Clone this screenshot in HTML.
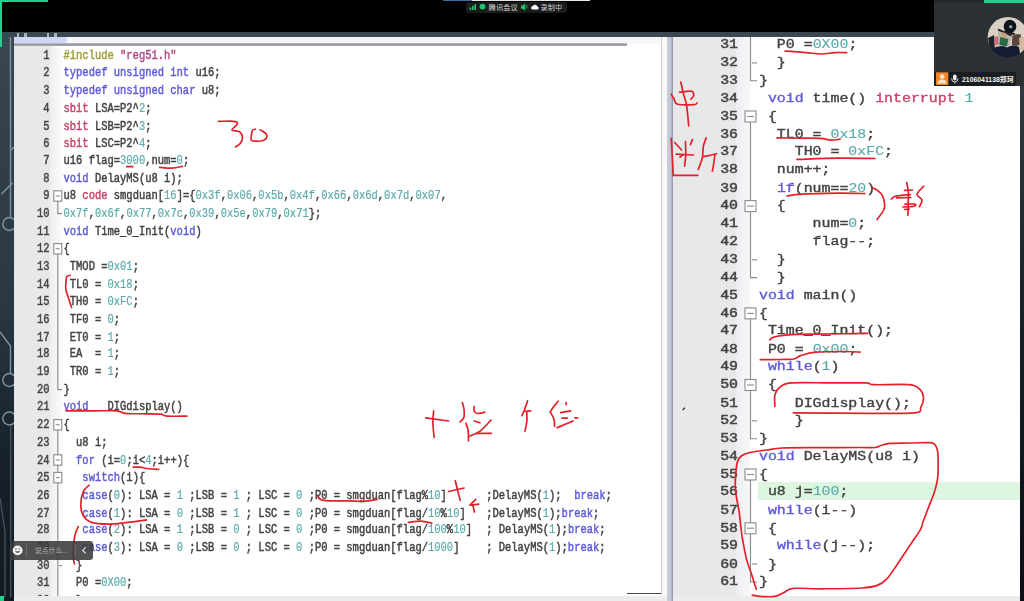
<!DOCTYPE html>
<html lang="zh">
<head>
<meta charset="utf-8">
<title>腾讯会议 - 屏幕共享</title>
<style>
*{margin:0;padding:0;box-sizing:border-box}
html,body{width:1024px;height:601px;overflow:hidden;background:#fff}
body{position:relative;font-family:"Liberation Sans","Noto Sans CJK SC",sans-serif}
.abs{position:absolute}
/* ---------- frame ---------- */
#topblack{left:0;top:0;width:1024px;height:32px;background:#000}
#topstrip{left:0;top:32px;width:1024px;height:4.5px;background:#3b4852}
#leftstrip{left:0;top:32px;width:14px;height:569px;background:linear-gradient(180deg,#3a4851 0,#34424c 70px,#2a3842 270px,#18222b 420px,#121a21 569px)}
#leftline{left:14px;top:37px;width:1px;height:560px;background:#dde5ef}
#rightstrip{left:1020.2px;top:86px;width:3.8px;height:515px;background:linear-gradient(180deg,#2f3b43 0,#18222a 214px,#0b0d13 515px);z-index:4}
#gtop{left:0;top:0;width:48px;height:2px;background:#1fd18b}
#gleft{left:0;top:0;width:2px;height:47px;background:#1fd18b}
#gbot{left:0;top:596px;width:4px;height:5px;background:#1fd18b}
/* ---------- left pane ---------- */
#ltab{left:14px;top:36.5px;width:647px;height:7px;background:linear-gradient(90deg,#ccd8f4 0,#ccd8f4 51px,#f5f6f9 54px)}
#ltabline{left:14px;top:43px;width:613px;height:2.7px;background:linear-gradient(180deg,#c4c4cc,#8e8e96 60%,#b8b8be)}
#lgutter{left:15px;top:46px;width:35px;height:551px;background:#e8e8e8}
#lfoldm{left:50px;top:46px;width:13px;height:551px;background:linear-gradient(90deg,#eeeeee,#f7f7f7 60%,#fcfcfc)}
#lsbline{left:661px;top:37px;width:1px;height:558px;background:#d2cecf}
#lsb{left:662px;top:37px;width:5px;height:558px;background:#f8f8f9}
#divider{left:667px;top:36.5px;width:5.6px;height:565px;background:linear-gradient(90deg,#c9cddc 0,#c2c7d7 62%,#8a92a4 100%);z-index:3}
#lcorner{left:627.3px;top:592.8px;width:34px;height:1.5px;background:#484848}
#botbar{z-index:2;left:14px;top:595.6px;width:1006px;height:5.4px;background:#ececec}
/* ---------- right pane ---------- */
#rgutter{left:672px;top:36.5px;width:64px;height:560px;background:#e8e8e8}
#rfoldm{left:736px;top:36.5px;width:15px;height:560px;background:linear-gradient(90deg,#eceef2,#f9f9f9)}
#hl{left:758px;top:482px;width:262px;height:18px;background:#ddf6e0}
/* ---------- code ---------- */
pre{position:absolute;font-family:"Liberation Mono",monospace;font-weight:normal;-webkit-text-stroke:0.42px currentColor;transform:scaleY(.87);transform-origin:0 0;white-space:pre;color:#424242;filter:blur(.45px)}
#lnum{left:14px;top:46.9px;width:35.5px;text-align:right;font-size:10.45px;line-height:14.907px;transform:scaleY(1.18);color:#444;-webkit-text-stroke-width:.4px}
#lcode{left:63.5px;top:46.9px;font-size:10.47px;line-height:14.907px;transform:scaleY(1.18);-webkit-text-stroke-width:.4px}
#rnum{left:672px;top:35.7px;width:66px;text-align:right;font-size:14.9px;line-height:20.575px;color:#444;-webkit-text-stroke-width:.55px}
#rcode{left:759px;top:35.7px;font-size:14.9px;line-height:20.575px}
.k{color:#605cd8}
.k2{color:#cb4468}
.n{color:#58aaaa;-webkit-text-stroke-width:.15px}
.p{color:#9e9e3c}
.s{color:#b04c88}

#tabmarks i{position:absolute;top:33px;width:2px;height:4px;background:#aab3ba;display:block}
#tabmarks{left:0;top:0}
#topbar1{left:443px;top:0;width:29px;height:1px;background:#3f6c9c}
#topbar2{left:472px;top:0;width:118px;height:1px;background:#e4e4e4}
#pill{left:466px;top:1.5px;width:101px;height:11px;background:#1b1b1b;border-radius:2px}
#pill svg,#chat svg{display:block}
#vid{z-index:6;left:934px;top:0;width:90px;height:86px;background:#2b3135;overflow:hidden}
#vidtop{left:0;top:0;width:90px;height:3px;background:#22282c}
#vidgreen{left:50px;top:0;width:40px;height:2.5px;background:#1fd18b}
#vidlabel{left:0;top:72px;width:82px;height:14px;background:#1b1e21}
#chat{z-index:6;left:10px;top:541px;width:83px;height:19px;background:rgba(58,58,58,.88);border-radius:3px;overflow:hidden}
.t{display:inline-block;width:1.6px}
</style>
</head>
<body>
<div class="abs" id="topblack"></div>
<div class="abs" id="topstrip"></div>
<div class="abs" id="leftstrip"></div>
<div class="abs" id="leftline"></div>
<div class="abs" id="rightstrip"></div>

<!-- left pane -->
<div class="abs" id="ltab"></div>
<div class="abs" id="ltabline"></div>
<div class="abs" id="lgutter"></div>
<div class="abs" id="lfoldm"></div>
<div class="abs" id="lsbline"></div>
<div class="abs" id="lsb"></div>
<div class="abs" id="divider"></div>
<div class="abs" id="lcorner"></div>

<!-- right pane -->
<div class="abs" id="rgutter"></div>
<div class="abs" id="rfoldm"></div>
<div class="abs" id="hl"></div>

<!--FOLD-->
<svg class="abs" id="fold" width="1024" height="601" viewBox="0 0 1024 601" style="left:0;top:0"><g fill="none" stroke="#8a8a8a" stroke-width="1.1">
<path d="M750.5,37 V80.8 H757"/>
<path d="M752.0,62.9 H757"/>
<path d="M750.5,116.5 V277.6 H757"/>
<path d="M752.0,259.8 H757"/>
<rect x="745.0" y="111.0" width="11.0" height="11.0" fill="#fff"/><path d="M747.0,116.5 H754.0"/>
<rect x="745.0" y="200.6" width="11.0" height="11.0" fill="#fff"/><path d="M747.0,206.1 H754.0"/>
<path d="M750.5,313.4 V438.7 H757"/>
<path d="M752.0,420.8 H757"/>
<rect x="745.0" y="307.9" width="11.0" height="11.0" fill="#fff"/><path d="M747.0,313.4 H754.0"/>
<rect x="745.0" y="379.5" width="11.0" height="11.0" fill="#fff"/><path d="M747.0,385.0 H754.0"/>
<path d="M750.5,474.5 V582.0 H757"/>
<path d="M752.0,564.0 H757"/>
<rect x="745.0" y="469.0" width="11.0" height="11.0" fill="#fff"/><path d="M747.0,474.5 H754.0"/>
<rect x="745.0" y="522.8" width="11.0" height="11.0" fill="#fff"/><path d="M747.0,528.2 H754.0"/>
<path d="M57.8,196.0 V213.6 H62"/>
<rect x="53.8" y="190.8" width="8.0" height="10.4" fill="#fff"/><path d="M55.8,196.0 H59.8"/>
<path d="M57.8,248.8 V389.6 H62"/>
<rect x="53.8" y="243.6" width="8.0" height="10.4" fill="#fff"/><path d="M55.8,248.8 H59.8"/>
<path d="M57.8,424.8 V597"/>
<path d="M58.8,565.6 H62"/>
<rect x="53.8" y="419.6" width="8.0" height="10.4" fill="#fff"/><path d="M55.8,424.8 H59.8"/>
<rect x="53.8" y="454.8" width="8.0" height="10.4" fill="#fff"/><path d="M55.8,460.0 H59.8"/>
<rect x="53.8" y="472.4" width="8.0" height="10.4" fill="#fff"/><path d="M55.8,477.6 H59.8"/>
</g></svg>
<!--/FOLD-->
<pre id="lnum">1
2
3
4
5
6
7
8
9
10
11
12
13
14
15
16
17
18
19
20
21
22
23
24
25
26
27
28
29
30
31
32</pre>
<pre id="lcode"><span class="p">#include </span><span class="s">"reg51.h"</span>
<span class="k">typedef unsigned int</span> u16;
<span class="k">typedef unsigned char</span> u8;
<span class="k2">sbit</span> LSA=P2^<span class="n">2</span>;
<span class="k2">sbit</span> LSB=P2^<span class="n">3</span>;
<span class="k2">sbit</span> LSC=P2^<span class="n">4</span>;
u16 flag=<span class="n">3000</span>,num=<span class="n">0</span>;
<span class="k">void</span> DelayMS(u8 i);
u8 <span class="k2">code</span> smgduan[<span class="n">16</span>]={<span class="n">0x3f</span>,<span class="n">0x06</span>,<span class="n">0x5b</span>,<span class="n">0x4f</span>,<span class="n">0x66</span>,<span class="n">0x6d</span>,<span class="n">0x7d</span>,<span class="n">0x07</span>,
<span class="n">0x7f</span>,<span class="n">0x6f</span>,<span class="n">0x77</span>,<span class="n">0x7c</span>,<span class="n">0x39</span>,<span class="n">0x5e</span>,<span class="n">0x79</span>,<span class="n">0x71</span>};
<span class="k">void</span> Time_0_Init(<span class="k">void</span>)
{
 TMOD =<span class="n">0x01</span>;
 TL0 = <span class="n">0x18</span>;
 TH0 = <span class="n">0xFC</span>;
 TF0 = <span class="n">0</span>;
 ET0 = <span class="n">1</span>;
 EA  = <span class="n">1</span>;
 TR0 = <span class="n">1</span>;
}
<span class="k">void</span>   DIGdisplay()
{
  u8 i;
  <span class="k">for</span> (i=<span class="n">0</span>;i&lt;<span class="n">4</span>;i++){
   <span class="k">switch</span>(i){
   <span class="k">case</span>(<span class="n">0</span>): LSA = <span class="n">1</span> ;LSB = <span class="n">1</span> ; LSC = <span class="n">0</span> ;P0 = smgduan[flag%<span class="n">10</span>]      <i class="t"></i>;DelayMS(<span class="n">1</span>);  <span class="k">break</span>;
   <span class="k">case</span>(<span class="n">1</span>): LSA = <span class="n">0</span> ;LSB = <span class="n">1</span> ; LSC = <span class="n">0</span> ;P0 = smgduan[flag/<span class="n">10</span>%<span class="n">10</span>]   <i class="t"></i>;DelayMS(<span class="n">1</span>);<span class="k">break</span>;
   <span class="k">case</span>(<span class="n">2</span>): LSA = <span class="n">1</span> ;LSB = <span class="n">0</span> ; LSC = <span class="n">0</span> ;P0 = smgduan[flag/<span class="n">100</span>%<span class="n">10</span>]  <i class="t"></i>; DelayMS(<span class="n">1</span>);<span class="k">break</span>;
   <span class="k">case</span>(<span class="n">3</span>): LSA = <span class="n">0</span> ;LSB = <span class="n">0</span> ; LSC = <span class="n">0</span> ;P0 = smgduan[flag/<span class="n">1000</span>]    <i class="t"></i>; DelayMS(<span class="n">1</span>);<span class="k">break</span>;
  }
  P0 =<span class="n">0X00</span>;
  }</pre>

<pre id="rnum">31
32
33
34
35
36
37
38
39
40
41
42
43
44
45
46
47
48
49
50
51
52
53
54
55
56
57
58
59
60
61</pre>
<pre id="rcode">  P0 =<span class="n">0X00</span>;
  }
}
 <span class="k">void</span> time() <span class="k2">interrupt</span> <span class="n">1</span>
 {
  TL0 = <span class="n">0x18</span>;
    TH0 = <span class="n">0xFC</span>;
  num++;
  <span class="k">if</span>(num==<span class="n">20</span>)
  {
      num=<span class="n">0</span>;
      flag--;
  }
  }
<span class="k">void</span> main()
{
 Time_0_Init();
 P0 = <span class="n">0x00</span>;
 <span class="k">while</span>(<span class="n">1</span>)
 {
    DIGdisplay();
    }
}
<span class="k">void</span> DelayMS(u8 i)
{
 u8 j=<span class="n">100</span>;
 <span class="k">while</span>(i--)
 {
  <span class="k">while</span>(j--);
 }
}</pre>

<!--INK-->
<svg class="abs" id="ink" width="1024" height="601" viewBox="0 0 1024 601" style="left:0;top:0;filter:blur(.3px);z-index:5" role="img" aria-label="手写批注：30 十位 个位 十 个 中断 载"><title>手写批注：30 十位 个位 十 个 中断 载</title><g fill="none" stroke="#e3212b" stroke-width="1.7" stroke-linecap="round" stroke-linejoin="round">
<path d="M218.6,121.3 C220.3,121.3 226.2,121.2 229.0,121.2 C231.8,121.2 234.1,121.1 235.5,121.6 C236.9,122.1 237.9,122.8 237.3,124.2 C236.7,125.6 231.6,128.7 232.0,130.0 C232.4,131.3 237.8,130.5 239.6,131.8 C241.3,133.1 242.4,135.7 242.5,137.6 C242.6,139.5 241.4,141.8 240.2,143.4 C239.0,145.0 236.3,146.3 235.5,146.9"/>
<path d="M255.2,129.1 C254.7,129.3 253.0,129.8 252.4,130.6 C251.8,131.4 251.8,132.4 251.6,134.0 C251.4,135.6 250.5,139.0 251.4,140.2 C252.3,141.4 255.2,141.1 257.0,141.2 C258.8,141.3 260.7,141.2 262.2,140.8 C263.7,140.4 265.0,139.6 265.8,138.8 C266.6,138.0 266.9,136.9 266.9,136.0 C266.9,135.1 266.5,134.4 265.8,133.6 C265.1,132.8 263.5,131.8 262.6,131.2 C261.7,130.6 260.6,130.2 260.2,130.0"/>
<path d="M159.6,167.4 C161.7,167.5 168.2,168.4 172.0,168.2 C175.8,168.0 180.8,166.6 182.5,166.3"/>
<path d="M70.0,275.4 C69.5,275.6 67.5,275.5 66.8,276.6 C66.1,277.7 66.2,279.9 66.0,282.0 C65.8,284.1 65.4,286.4 65.8,289.1 C66.2,291.8 67.5,294.9 68.5,298.0 C69.5,301.1 71.1,305.8 71.6,307.4"/>
<path d="M66.0,410.8 C70.8,410.8 86.6,410.9 95.0,410.9 C103.4,410.9 111.5,410.4 116.5,410.8 C121.5,411.2 120.5,412.8 125.3,413.3 C130.1,413.8 139.1,413.7 145.0,413.8 C150.9,413.9 156.8,413.8 160.5,414.2 C164.2,414.6 162.6,415.8 167.0,416.1 C171.4,416.4 183.5,416.2 186.8,416.2"/>
<path d="M133.2,467.2 C134.3,467.2 137.7,466.9 140.0,467.1 C142.3,467.3 143.9,468.1 147.0,468.5 C150.1,468.9 156.7,469.2 158.6,469.4"/>
<path d="M433.7,410.9 C433.6,412.7 432.7,417.1 432.8,421.5 C432.9,425.9 433.9,434.7 434.1,437.3"/>
<path d="M462.3,402.5 C462.6,403.8 463.9,407.4 464.1,410.0 C464.3,412.6 464.4,415.9 463.7,417.9 C463.0,419.9 460.7,421.2 460.1,421.9"/>
<path d="M465.9,423.2 C466.3,424.4 467.7,427.4 468.1,430.3 C468.5,433.2 468.4,439.1 468.5,440.9"/>
<path d="M474.2,406.5 C474.2,407.2 473.7,409.7 474.2,410.9 C474.7,412.1 475.5,413.3 477.3,413.5 C479.1,413.7 483.6,412.4 484.8,412.2"/>
<path d="M491.0,420.1 C489.2,422.0 483.5,428.6 480.0,431.2 C476.5,433.8 471.5,435.2 469.8,436.0"/>
<path d="M527.6,400.7 C527.1,402.2 525.6,407.1 524.6,409.6 C523.6,412.1 522.4,414.7 521.9,415.7"/>
<path d="M526.8,411.8 C526.8,413.4 527.1,418.3 526.8,421.5 C526.5,424.7 525.3,429.6 525.0,431.2"/>
<path d="M558.1,401.2 C557.3,402.2 554.5,405.5 553.2,407.3 C551.9,409.1 550.6,411.4 550.1,412.2"/>
<path d="M550.6,412.6 C551.2,413.8 553.5,417.4 554.1,419.7 C554.8,422.0 554.4,425.2 554.5,426.3"/>
<path d="M89.1,485.3 C88.1,486.4 84.7,488.3 83.3,491.6 C81.9,494.9 80.8,501.0 80.8,505.0 C80.8,509.0 81.5,512.9 83.3,515.8 C85.1,518.7 87.2,521.0 91.6,522.4 C96.0,523.8 102.7,524.2 109.9,524.1 C117.1,524.0 128.8,522.3 134.9,521.6 C141.0,520.9 144.6,520.2 146.5,519.9"/>
<path d="M78.3,526.6 C77.8,528.0 75.8,531.3 75.0,534.9 C74.2,538.5 73.5,544.0 73.3,548.2 C73.1,552.4 73.4,557.3 73.6,559.9 C73.8,562.5 74.4,563.3 74.6,564.0"/>
<path d="M317.6,496.4 C318.6,497.0 318.2,499.6 323.4,500.3 C328.6,501.1 341.9,500.7 348.8,500.9 C355.7,501.1 359.8,501.6 364.5,501.3 C369.2,501.0 375.0,499.6 377.1,499.3"/>
<path d="M455.3,480.7 C455.7,482.2 456.7,486.7 457.5,490.0 C458.3,493.3 459.8,498.6 460.2,500.3"/>
<path d="M408.4,522.3 C410.5,522.1 417.2,521.1 421.1,521.2 C425.0,521.3 430.0,522.8 431.8,523.1"/>
<path d="M785.1,51.2 C788.5,51.4 799.6,52.1 805.6,52.6 C811.6,53.1 816.4,54.0 821.3,54.0 C826.2,54.0 830.7,52.8 834.9,52.6 C839.1,52.4 844.6,52.6 846.6,52.6"/>
<path d="M680.8,82.2 C681.3,84.3 682.7,90.7 683.7,94.6 C684.7,98.5 685.8,100.3 686.6,105.5 C687.4,110.7 688.4,122.4 688.7,125.8"/>
<path d="M679.6,92.1 C681.6,92.0 689.2,90.7 691.6,91.3 C694.0,91.9 693.8,94.2 693.7,95.5 C693.6,96.8 691.3,98.6 690.8,99.2"/>
<path d="M671.2,94.2 C671.7,95.0 673.0,97.3 674.0,99.0 C675.0,100.7 674.1,103.3 677.5,104.2 C680.9,105.1 690.9,104.8 694.1,104.6 C697.4,104.4 696.5,103.3 697.0,103.0"/>
<path d="M671.2,138.3 C671.4,140.8 671.8,147.1 672.1,153.3 C672.5,159.5 673.1,171.6 673.3,175.3"/>
<path d="M685.4,141.6 C685.5,143.7 685.9,150.0 685.8,154.1 C685.7,158.2 684.8,164.2 684.6,166.2"/>
<path d="M706.2,137.9 C705.7,139.3 703.9,143.3 703.3,146.6 C702.7,149.9 703.2,153.7 702.4,157.5 C701.6,161.3 699.0,167.5 698.3,169.5"/>
<path d="M703.3,156.6 C704.7,156.3 709.4,155.5 711.6,155.0 C713.8,154.5 715.8,153.9 716.6,153.7"/>
<path d="M714.9,155.0 C714.7,156.3 714.2,160.3 713.8,163.0 C713.4,165.7 712.6,169.8 712.4,171.2"/>
<path d="M776.9,137.9 C780.8,137.9 792.8,138.0 800.0,138.1 C807.2,138.2 814.8,138.0 819.9,138.3 C825.0,138.6 827.5,139.9 830.9,140.1 C834.3,140.2 838.6,139.3 840.1,139.2"/>
<path d="M797.0,159.4 C803.9,159.2 825.2,158.2 838.2,158.1 C851.2,157.9 868.8,158.4 874.9,158.5"/>
<path d="M787.0,196.0 C789.4,195.7 793.1,194.7 801.6,194.2 C810.1,193.7 827.7,193.3 838.2,193.2 C848.7,193.1 860.4,193.5 864.8,193.6"/>
<path d="M871.7,187.5 C872.7,188.0 875.7,189.0 877.5,190.4 C879.3,191.8 881.3,193.5 882.5,195.8 C883.7,198.1 884.4,201.7 884.6,204.1 C884.8,206.5 885.0,207.4 883.7,210.0 C882.5,212.6 878.2,217.9 877.1,219.5"/>
<path d="M906.6,182.5 C906.9,184.0 908.0,188.2 908.3,191.6 C908.6,195.0 908.3,199.0 908.2,203.0 C908.1,207.0 908.0,213.3 907.9,215.4"/>
<path d="M891.2,199.1 C892.0,198.6 892.6,196.9 895.8,196.2 C899.0,195.4 908.0,194.9 910.4,194.6"/>
<path d="M905.0,204.1 C906.6,204.1 913.4,203.8 914.9,204.1 C916.4,204.4 916.1,205.7 914.1,206.2 C912.1,206.7 904.8,206.9 902.9,207.0"/>
<path d="M923.7,186.2 C922.6,187.5 917.3,191.8 917.0,194.1 C916.7,196.4 921.6,197.9 922.0,200.0 C922.4,202.1 919.9,205.5 919.5,206.6"/>
<path d="M769.8,339.9 C770.5,339.4 770.4,338.0 773.9,337.1 C777.4,336.2 783.6,335.2 791.0,334.7 C798.4,334.2 805.6,334.3 818.4,334.1 C831.2,333.9 859.4,333.4 867.6,333.3"/>
<path d="M760.3,359.7 C763.6,359.7 774.4,359.6 780.0,359.5 C785.6,359.4 790.4,359.6 793.8,359.0 C797.2,358.4 797.0,356.7 800.6,355.6 C804.2,354.5 808.1,352.9 815.6,352.2 C823.1,351.5 838.3,351.5 845.7,351.5 C853.1,351.5 857.7,352.1 860.1,352.2"/>
<path d="M774.9,406.3 C774.9,404.4 774.2,398.0 774.9,394.9 C775.6,391.8 776.6,389.8 779.3,387.8 C781.9,385.8 782.3,383.7 790.8,382.9 C799.3,382.1 817.8,382.9 830.3,382.9 C842.8,382.9 858.2,382.6 865.5,382.9 C872.8,383.2 867.0,384.4 874.3,384.7 C881.6,385.0 901.8,383.9 909.4,384.7 C917.0,385.5 917.6,387.3 920.0,389.6 C922.4,391.9 923.4,395.5 923.5,398.4 C923.6,401.3 922.3,404.8 920.8,407.2 C919.3,409.6 923.9,411.8 914.7,412.8 C905.5,413.8 885.7,413.3 865.5,413.3 C845.3,413.3 805.4,412.9 793.4,412.8"/>
<path d="M756.3,589.3 C755.6,587.2 753.9,581.6 752.3,576.6 C750.7,571.6 748.1,565.3 746.5,559.1 C744.9,552.9 743.6,544.9 742.6,539.5 C741.6,534.1 741.4,531.2 740.8,526.5 C740.2,521.8 739.8,516.2 739.1,511.5 C738.4,506.8 737.2,502.3 736.6,498.2 C736.0,494.1 735.4,490.8 735.3,486.6 C735.2,482.5 735.4,477.5 735.8,473.3 C736.2,469.1 736.5,464.5 737.5,461.6 C738.5,458.7 739.5,457.3 741.6,455.8 C743.7,454.3 745.8,453.5 750.0,452.5 C754.2,451.5 761.2,450.8 766.6,450.0 C772.0,449.2 773.5,448.4 782.4,448.0 C791.3,447.6 807.1,447.7 820.0,447.6 C832.9,447.5 850.8,447.5 860.0,447.5 C869.2,447.5 871.4,447.9 875.0,447.5 C878.6,447.1 879.1,446.0 881.6,445.3 C884.1,444.6 885.3,443.7 890.0,443.3 C894.7,442.9 903.2,443.1 909.9,443.0 C916.5,442.9 925.7,442.3 929.9,442.6 C934.1,442.9 933.6,443.4 934.9,444.6 C936.1,445.8 936.8,446.9 937.4,450.0 C938.0,453.1 938.2,458.3 938.2,463.3 C938.2,468.3 938.1,474.9 937.4,479.9 C936.7,484.9 935.5,488.5 934.0,493.2 C932.5,497.9 930.0,503.5 928.2,508.2 C926.4,512.9 924.5,517.9 923.2,521.5 C921.9,525.1 922.1,526.5 920.3,529.8 C918.5,533.1 915.1,537.6 912.5,541.5 C909.9,545.4 907.3,549.3 904.7,553.2 C902.1,557.1 899.8,560.7 896.9,564.9 C894.0,569.1 890.4,575.2 887.1,578.6 C883.8,582.0 881.5,583.8 877.3,585.4 C873.1,587.0 870.8,587.4 861.7,588.0 C852.6,588.6 834.1,588.7 822.7,588.8 C811.3,588.9 799.9,587.8 793.4,588.4 C786.9,589.0 786.5,591.4 783.6,592.7 C780.7,594.0 779.0,595.6 775.8,596.2 C772.5,596.9 768.0,596.8 764.1,596.6 C760.2,596.4 754.3,595.4 752.3,595.2"/>
<path d="M126.7,166.7 L132.8,166.7"/>
<path d="M425.7,417.8 L448.7,421.0"/>
<path d="M474.2,421.0 L480.0,422.8"/>
<path d="M476.4,433.4 L491.4,433.4"/>
<path d="M525.0,411.3 L530.7,410.9"/>
<path d="M566.0,402.5 L566.3,404.7"/>
<path d="M560.7,412.6 L570.8,410.9"/>
<path d="M562.0,418.1 L567.3,418.1"/>
<path d="M574.8,417.8 L577.7,417.8"/>
<path d="M573.0,421.0 L557.2,427.6"/>
<path d="M448.4,491.5 L464.1,488.0"/>
<path d="M475.8,499.3 L469.9,505.2"/>
<path d="M470.9,505.2 L478.7,504.2"/>
<path d="M472.9,505.2 L474.4,512.0"/>
<path d="M673.3,175.3 L697.9,175.3"/>
<path d="M674.6,142.5 L681.6,150.0"/>
<path d="M692.5,139.6 L690.4,144.6"/>
<path d="M676.2,154.1 L693.3,155.0"/>
<path d="M682.9,155.0 L680.0,157.0"/>
<path d="M904.5,190.4 L912.4,190.0"/>
<path d="M896.6,197.9 L910.8,197.5"/>
<path d="M904.5,209.5 L909.1,209.1"/>
</g><path d="M682.8,410 L684.8,407.6" stroke="#3a2a30" stroke-width="1.4" fill="none"/></svg>
<!--/INK-->
<div class="abs" id="botbar"></div>
<!-- ===== overlays ===== -->
<svg class="abs" id="deco" width="14" height="569" viewBox="0 32 14 569" style="left:0;top:32px;filter:blur(.4px)">
<g fill="none" stroke="#7f959d" stroke-width="1.4">
<path d="M10.5,37 V217"/><circle cx="9.3" cy="224" r="6.5"/>
<path d="M10.5,150.5 L14,147"/><path d="M12.5,183 L1.5,194"/>
<path d="M0,332 L10.5,346 V373"/><circle cx="9.3" cy="380" r="6.5"/>
<circle cx="9.3" cy="418.5" r="6.5"/><path d="M10.8,425 V597" stroke="#59666e" stroke-width="1"/>
<path d="M0,498 L5,532 V597" stroke="#4a575f" stroke-width="1.2"/>
</g></svg>
<div class="abs" id="tabmarks"><i style="left:17px"></i><i style="left:24px;width:3px"></i><i style="left:47px"></i><i style="left:54px;width:3px"></i></div>

<div class="abs" id="topbar1"></div><div class="abs" id="topbar2"></div>
<div class="abs" id="pill">
<svg width="101" height="11" viewBox="0 0 101 11">
<g fill="#21c56c"><rect x="3.6" y="5.4" width="1.6" height="2.6"/><rect x="6" y="3.8" width="1.6" height="4.2"/><rect x="8.4" y="2.2" width="1.6" height="5.8"/><circle cx="16.5" cy="4.6" r="2.9"/>
<path d="M55,3.4 h1.6 l2.6,-2 v7.4 l-2.6,-2 h-1.6z"/><path d="M60.3,2.6 q1.6,1.9 0,3.9" fill="none" stroke="#21c56c" stroke-width=".8"/></g>
<path d="M66.4,7.6 a1.9,1.9 0 0 1 .5,-3.7 a2.4,2.4 0 0 1 4.4,.5 a1.7,1.7 0 0 1 .4,3.2z" fill="#fff"/>
<text x="22.6" y="7.9" font-family="'Liberation Sans','Noto Sans CJK SC',sans-serif" font-size="7.3" fill="#d8d8d8">腾讯会议</text>
<text x="74.6" y="7.9" font-family="'Liberation Sans','Noto Sans CJK SC',sans-serif" font-size="7.2" fill="#d0d0d0">录制中</text>
</svg></div>

<div class="abs" id="vid">
<div class="abs" id="vidtop"></div><div class="abs" id="vidgreen"></div>
<svg class="abs" style="left:0;top:0" width="90" height="86" viewBox="934 0 90 86">
<defs><clipPath id="av"><circle cx="1007.9" cy="37.2" r="20.2"/></clipPath><filter id="avb" x="-10%" y="-10%" width="120%" height="120%"><feGaussianBlur stdDeviation=".7"/></filter></defs>
<g clip-path="url(#av)"><g filter="url(#avb)">
<rect x="985" y="14" width="45" height="46" fill="#d9d1c6"/>
<path d="M988,38 L994,35 L995,50 L990,52z" fill="#1d202b"/>
<path d="M994,37 l4.5,-1 l1,8 l-5,2z" fill="#c9707a"/>
<path d="M998,29 L1011.5,35 L1009,46.5 L998.5,44z" fill="#b9b6a8"/>
<path d="M998,28.6 L1012,34.6 L1011.4,36.4 L997.8,30.6z" fill="#23242a"/>
<path d="M1002,32 l4.5,1.5 l-.6,4.5 l-4.5,-1z" fill="#c79b7c"/>
<path d="M1000.2,37 l8,2 l-1.2,7.6 l-7.6,-1.6z" fill="#2c6a48"/>
<ellipse cx="1010" cy="26.3" rx="6.3" ry="6.6" fill="#11131b"/>
<path d="M1005,30 l10,3.2 l-.6,2 l-10,-3.4z" fill="#15171e"/>
<rect x="1009.2" y="25.2" width="3" height="3" rx="1" fill="#9aa5a8"/>
<path d="M1012.3,36 q4,-3 8.5,-1.5 l0.5,10 q-5,2 -9.5,0.5z" fill="#5a443c"/>
<path d="M1019,38 q4,-2 7,0 v12 h-6z" fill="#d5b9a0"/>
<path d="M992,49 q8,-5 15,-1.5 q6,-3.5 12,-0.5 l2,12 h-32z" fill="#161c31"/>
</g></g></svg>
<div class="abs" id="vidlabel"></div>
<svg class="abs" style="left:0;top:72px" width="90" height="14" viewBox="934 72 90 14">
<rect x="936" y="72.3" width="12.3" height="12.7" fill="#f5852a"/>
<circle cx="942.1" cy="76.6" r="2.3" fill="#fde3c8"/><path d="M937.6,83.6 q0.4,-4.2 4.5,-4.2 q4.1,0 4.5,4.2z" fill="#fde3c8"/>
<rect x="953" y="74.4" width="3.6" height="6" rx="1.8" fill="#f0f0f0"/><path d="M951.6,78.4 q0,3.6 3.2,3.6 q3.2,0 3.2,-3.6 M954.8,82 v1.6" stroke="#f0f0f0" stroke-width=".9" fill="none"/>
<text x="962" y="81.8" font-family="'Liberation Sans','Noto Sans CJK SC',sans-serif" font-size="7.2" font-weight="bold" fill="#f4f4f4" textLength="51.5" lengthAdjust="spacingAndGlyphs">2106041138郑珂</text>
</svg></div>

<div class="abs" id="chat">
<svg width="83" height="19" viewBox="10 541 83 19">
<circle cx="17.6" cy="550.4" r="4.9" fill="#f4f4f4"/><circle cx="15.9" cy="549" r=".8" fill="#555"/><circle cx="19.3" cy="549" r=".8" fill="#555"/><path d="M14.6,551.2 q3,3.6 6,0z" fill="#555"/>
<path d="M26.6,544.5 V556.5 M75.2,544.5 V556.5" stroke="#7a7a7a" stroke-width=".7"/>
<text x="35" y="553.2" font-family="'Liberation Sans','Noto Sans CJK SC',sans-serif" font-size="6.8" fill="#b4b4b4">说点什么...</text>
<path d="M85.6,547.4 L82.8,550.4 L85.6,553.4" fill="none" stroke="#eee" stroke-width="1.1"/>
</svg></div>

<div class="abs" id="gtop"></div>
<div class="abs" id="gleft"></div>
<div class="abs" id="gbot"></div>
</body>
</html>
